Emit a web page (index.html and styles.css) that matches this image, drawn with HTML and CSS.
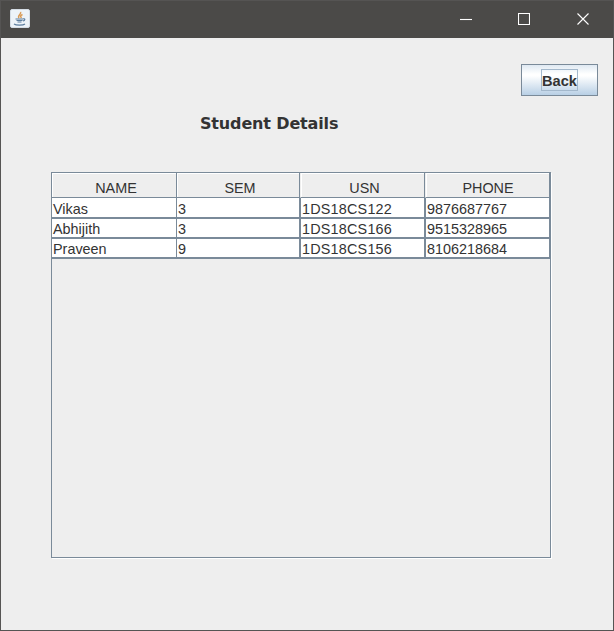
FILE: index.html
```html
<!DOCTYPE html>
<html lang="en">
<head>
<meta charset="utf-8">
<title>Student Details</title>
<link rel="stylesheet" href="styles.css">
</head>
<body>
<div class="window">
  <header class="titlebar">
    <svg class="app-icon" width="20" height="20" viewBox="0 0 20 20" fill="none">
      <rect x=".5" y=".5" width="19" height="18" rx="1.5" fill="#edf3f8" stroke="#d5dde5"/>
      <path d="M10.500 3c1.500 2-3.500 3-1.500 6M12.500 5.500c-2 1-2.500 2-1 3.500" stroke="#d99a54" stroke-width="1.500"/>
      <path d="M5.500 10h8M6.500 11.500h6M7.500 13h4M13.500 9.500c2 0 1.500 2-.5 2.500M4 15c2 1.500 9 1.500 11 0" stroke="#5d7e9e" stroke-width="1.200"/>
    </svg>
    <div class="controls">
      <svg width="12" height="12"><path d="M0 6.500h12"/></svg>
      <svg width="12" height="12"><path d="M.5.500h11v11H.5z"/></svg>
      <svg class="close" width="12" height="12"><path d="M.5.500l11 11M11.500.500l-11 11"/></svg>
    </div>
  </header>
  <main class="content">
    <button class="back"><span>Back</span></button>
    <h1>Student Details</h1>
    <section class="table-pane">
      <div class="row head"><div>NAME</div><div>SEM</div><div>USN</div><div>PHONE</div></div>
      <div class="row"><div>Vikas</div><div>3</div><div class="usn">1DS18CS122</div><div>9876687767</div></div>
      <div class="row"><div>Abhijith</div><div>3</div><div class="usn">1DS18CS166</div><div>9515328965</div></div>
      <div class="row"><div>Praveen</div><div>9</div><div class="usn">1DS18CS156</div><div>8106218684</div></div>
    </section>
  </main>
</div>
</body>
</html>
```
FILE: styles.css
```css
* { box-sizing: border-box; }
body { margin: 0; font-family: "Liberation Sans", Arial, sans-serif; color: #333; }
.window {
  display: flex;
  flex-direction: column;
  width: 614px;
  height: 631px;
  border: 1px solid #555453;
  background: #eee;
}
.titlebar {
  display: flex;
  justify-content: space-between;
  height: 37px;
  padding: 8px 24px 0 9px;
  background: #4b4a48;
}
.controls { display: flex; gap: 46px; padding-top: 4px; }
.controls svg { fill: none; stroke: #fff; stroke-width: 1.1; }
.controls .close { margin-left: 1px; }
.content { display: flex; flex-direction: column; flex: 1; }
.back {
  align-self: flex-end;
  display: flex;
  align-items: center;
  justify-content: center;
  width: 77px;
  height: 32px;
  margin: 26px 15px 0 0;
  padding: 0;
  border: 1px solid #7a8a99;
  background: linear-gradient(#dfe9f2 0%, #fff 30%, #fff 36%, #b8cfe5 100%);
  color: #333;
  font: bold 14.6px "Liberation Sans", Arial, sans-serif;
}
.back span {
  width: 37px;
  height: 22px;
  border: 1px solid #a3b8cc;
  line-height: 22px;
  white-space: nowrap;
}
h1 {
  margin: 17px 0 0 199px;
  font: bold 16px/22px "DejaVu Sans", Verdana, sans-serif;
  letter-spacing: -0.15px;
  white-space: nowrap;
}
.table-pane {
  width: 500px;
  height: 386px;
  margin: 37px 0 0 50px;
  border: 1px solid #7a8a99;
  box-shadow: 1px 1px #fff;
}
.row {
  display: grid;
  grid-template: 20px / 125px 123px 125px 125px;
  height: 20px;
  font-size: 14.4px;
  line-height: 22px;
}
.row div {
  height: 20px;
  padding: 0 0 0 1px;
  border-right: 1px solid #7a8a99;
  border-bottom: 1px solid #7a8a99;
  background: #fff;
  box-shadow: inset 0 1px #7a8a99;
}
.row div:nth-child(n+3) {
  padding-left: 2px;
  box-shadow: inset 1px 1px #7a8a99;
}
.row .usn { letter-spacing: 0.2px; }
.head + .row div { box-shadow: none; }
.head + .row div:nth-child(n+3) { box-shadow: inset 1px 0 #7a8a99; }
.row:last-child { box-shadow: 0 1px #7a8a99; }
.row.head {
  grid-template-rows: 25px;
  height: 25px;
  line-height: 30px;
}
.row.head div {
  height: 25px;
  padding: 0 0 0 4px;
  text-align: center;
  background: #eee;
  box-shadow: inset 1px 1px #fff;
}
.row.head div:nth-child(n+3) {
  border-left: 1px solid #eee;
  padding-left: 1px;
}
.row.head div:nth-child(3) { padding-left: 4px; }
```
